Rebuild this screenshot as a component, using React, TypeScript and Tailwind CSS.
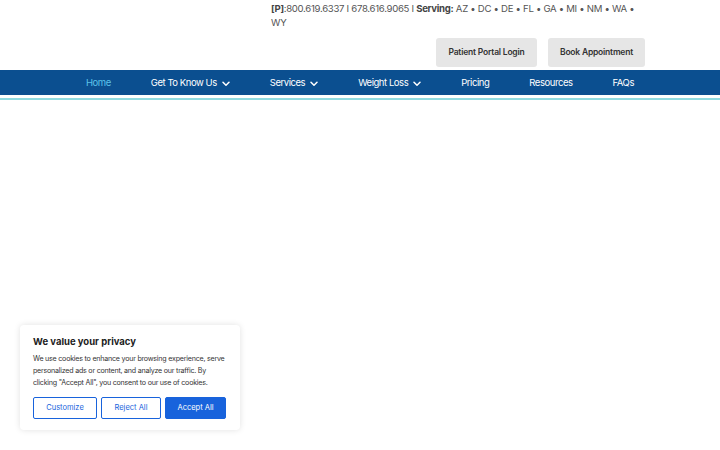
import React from "react";

const Chevron = () => (
  <svg width="8" height="6" viewBox="0 0 8 6" className="ml-[5px] mt-[1px]" fill="none">
    <path d="M1 1.2 L4 4.2 L7 1.2" stroke="white" strokeWidth="1.5" strokeLinecap="round" strokeLinejoin="round" />
  </svg>
);

export default function App() {
  const font = { fontFamily: "Inter, 'Noto Sans', sans-serif" };
  return (
    <div className="relative w-[720px] h-[450px] bg-white overflow-hidden" style={font}>
      <div className="h-[70px] flex flex-col">
        <div className="ml-[271px] w-[376px] pt-[2px] text-[9.6px] leading-[14px] text-[#555] tracking-[-0.3px]">
          <span className="font-bold text-[#444]">[P]</span>:800.619.6337 I 678.616.9065 I{" "}
          <span className="font-bold text-[#444]">Serving:</span> AZ • DC • DE • FL • GA • MI • NM • WA • WY
        </div>
        <div className="flex justify-end gap-[11px] pr-[75px] mt-[8px]">
          <div className="w-[101px] h-[29px] rounded-[3px] bg-[#e6e6e6] flex items-center justify-center text-[8.5px] font-semibold text-[#333] tracking-[-0.2px]">
            Patient Portal Login
          </div>
          <div className="w-[97px] h-[29px] rounded-[3px] bg-[#e6e6e6] flex items-center justify-center text-[8.5px] font-semibold text-[#333] tracking-[-0.2px]">
            Book Appointment
          </div>
        </div>
      </div>
      <div className="h-[25px] bg-[#0b4f90] flex items-center justify-center gap-[40px] pt-[1px] text-[9.5px] text-white tracking-[-0.45px]">
        <span className="text-[#5cc3ea]">Home</span>
        <span className="flex items-center">Get To Know Us<Chevron /></span>
        <span className="flex items-center">Services<Chevron /></span>
        <span className="flex items-center">Weight Loss<Chevron /></span>
        <span>Pricing</span>
        <span>Resources</span>
        <span>FAQs</span>
      </div>
      <div className="h-[3px]" />
      <div className="h-[1.5px] bg-[#8fdbe0]" />

      <div className="absolute left-[20px] top-[325px] w-[220px] h-[105px] bg-white rounded-[4px] shadow-[0_0_6px_rgba(0,0,0,0.12)] px-[12px] pt-[11px]">
        <div className="ml-[1px] text-[9.5px] font-bold text-[#212121] leading-[12px]">We value your privacy</div>
        <div className="ml-[1px] mt-[5px] text-[7.1px] leading-[12px] text-[#333] tracking-[-0.22px] whitespace-nowrap">
          We use cookies to enhance your browsing experience, serve
          <br />
          personalized ads or content, and analyze our traffic. By
          <br />
          clicking "Accept All", you consent to our use of cookies.
        </div>
        <div className="flex gap-[4px] mt-[8px] ml-[1px]">
          <div className="w-[64px] h-[22px] border-[1.5px] border-[#1863dc] rounded-[2px] flex items-center justify-center text-[7.5px] text-[#1863dc]">Customize</div>
          <div className="w-[60px] h-[22px] border-[1.5px] border-[#1863dc] rounded-[2px] flex items-center justify-center text-[7.5px] text-[#1863dc]">Reject All</div>
          <div className="w-[61px] h-[22px] bg-[#1863dc] border-[1.5px] border-[#1863dc] rounded-[2px] flex items-center justify-center text-[7.5px] text-white">Accept All</div>
        </div>
      </div>
    </div>
  );
}
